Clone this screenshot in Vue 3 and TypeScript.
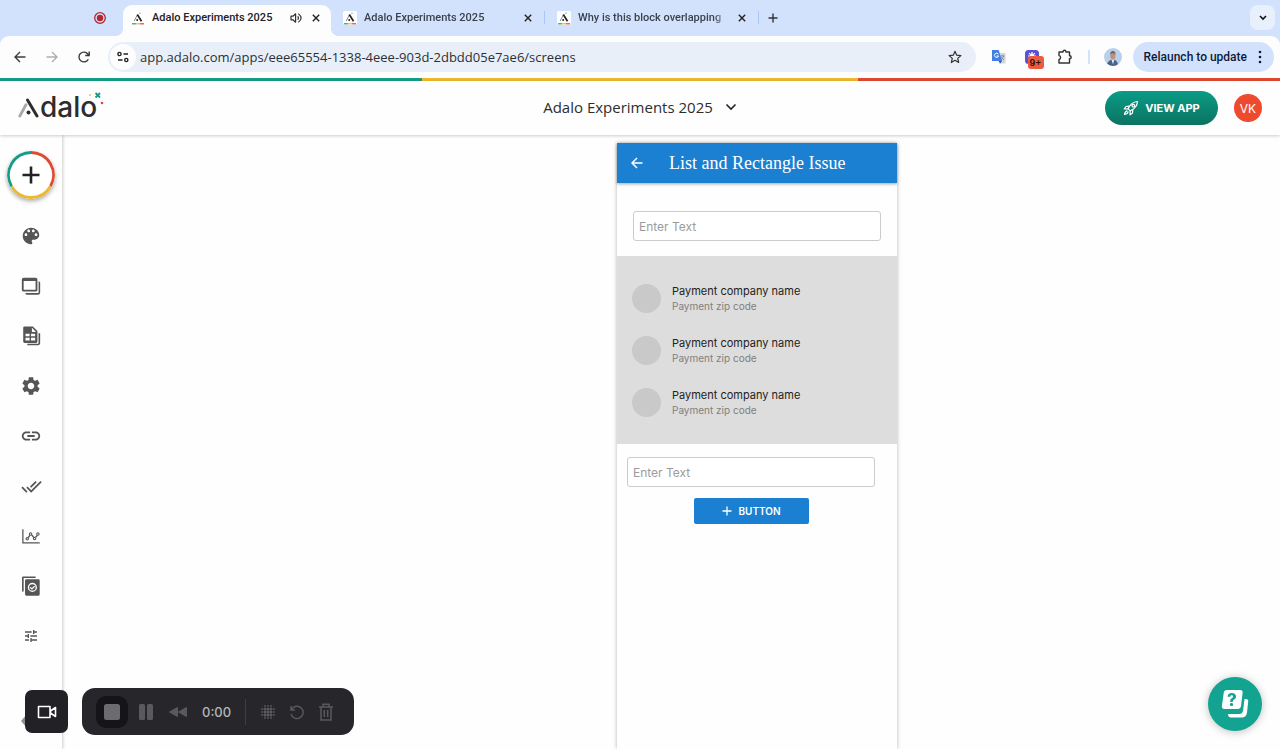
<script setup lang="ts">
import { ref } from 'vue'

interface Tab {
  id: number
  title: string
  active: boolean
  audible: boolean
}

interface NavItem {
  label: string
  path: string
  size: number
  evenOdd?: boolean
}

const tabs: Tab[] = [
  { id: 1, title: 'Adalo Experiments 2025', active: true, audible: true },
  { id: 2, title: 'Adalo Experiments 2025', active: false, audible: false },
  { id: 3, title: 'Why is this block overlapping', active: false, audible: false },
]

const url = ref('app.adalo.com/apps/eee65554-1338-4eee-903d-2dbdd05e7ae6/screens')

const navItems: NavItem[] = [
  {
    label: 'Branding',
    size: 22,
    path: 'M12 3c-4.97 0-9 4.03-9 9s4.03 9 9 9c.83 0 1.5-.67 1.5-1.5 0-.39-.15-.74-.39-1.01-.23-.26-.38-.61-.38-.99 0-.83.67-1.5 1.5-1.5H16c2.76 0 5-2.24 5-5 0-4.42-4.03-8-9-8zm-5.5 9c-.83 0-1.5-.67-1.5-1.5S5.67 9 6.5 9 8 9.67 8 10.5 7.33 12 6.5 12zm3-4C8.67 8 8 7.33 8 6.5S8.67 5 9.5 5s1.5.67 1.5 1.5S10.33 8 9.5 8zm5 0c-.83 0-1.5-.67-1.5-1.5S13.67 5 14.5 5s1.5.67 1.5 1.5S15.33 8 14.5 8zm3 4c-.83 0-1.5-.67-1.5-1.5S16.67 9 17.5 9s1.5.67 1.5 1.5-.67 1.5-1.5 1.5z',
  },
  {
    label: 'Screens',
    size: 22,
    evenOdd: true,
    path: 'M4 3h13a2 2 0 0 1 2 2v11a2 2 0 0 1-2 2H4a2 2 0 0 1-2-2V5a2 2 0 0 1 2-2zM4 6.500v9.500h13V6.500zM20.300 7H20.800a1.200 1.200 0 0 1 1.200 1.200V19a2.500 2.500 0 0 1-2.500 2.500H7.200A1.200 1.200 0 0 1 6 20.300V19.700h13.300a1 1 0 0 0 1-1z',
  },
  {
    label: 'Database',
    size: 22,
    evenOdd: true,
    path: 'M5 1.500h9l5 5V18a1.500 1.500 0 0 1-1.500 1.500H5A1.500 1.500 0 0 1 3.500 18V3A1.500 1.500 0 0 1 5 1.500zM13 3v4.500h4.500zM6 9.500v2.800h4.500V9.500zM12 9.500v2.800h4.500V9.500zM6 14v2.800h4.500V14zM12 14v2.800h4.500V14zM20.200 9H22v11a2 2 0 0 1-2 2H8v-1.500h11.200a1 1 0 0 0 1-1z',
  },
  {
    label: 'Settings',
    size: 22,
    path: 'M19.140 12.940c.04-.3.06-.61.06-.94 0-.32-.02-.64-.07-.94l2.030-1.580c.18-.14.23-.41.12-.61l-1.920-3.320c-.12-.22-.37-.29-.59-.22l-2.390.96c-.5-.38-1.030-.7-1.620-.94l-.36-2.540c-.04-.24-.24-.41-.48-.41h-3.840c-.24 0-.43.17-.47.41l-.36 2.540c-.59.24-1.130.57-1.620.94l-2.390-.96c-.22-.08-.47 0-.59.22L2.740 8.870c-.12.21-.08.47.12.61l2.030 1.580c-.05.3-.09.63-.09.94s.02.64.07.94l-2.030 1.580c-.18.14-.23.41-.12.61l1.920 3.320c.12.22.37.29.59.22l2.390-.96c.5.38 1.030.7 1.620.94l.36 2.540c.05.24.24.41.48.41h3.840c.24 0 .44-.17.47-.41l.36-2.540c.59-.24 1.130-.56 1.620-.94l2.390.96c.22.08.47 0 .59-.22l1.920-3.320c.12-.22.07-.47-.12-.61l-2.010-1.580zM12 15.600c-1.980 0-3.600-1.620-3.600-3.600s1.620-3.600 3.600-3.600 3.600 1.620 3.600 3.600-1.620 3.600-3.600 3.600z',
  },
  {
    label: 'Integrations',
    size: 22,
    path: 'M3.900 12c0-1.710 1.390-3.100 3.100-3.100h4V7H7c-2.760 0-5 2.240-5 5s2.240 5 5 5h4v-1.900H7c-1.710 0-3.100-1.390-3.100-3.100zM8 13h8v-2H8v2zm9-6h-4v1.900h4c1.710 0 3.100 1.390 3.100 3.100s-1.390 3.100-3.100 3.100h-4V17h4c2.760 0 5-2.240 5-5s-2.240-5-5-5z',
  },
  {
    label: 'Publish',
    size: 21,
    path: 'M18 7l-1.410-1.410-6.340 6.340 1.410 1.410L18 7zm4.240-1.410L11.660 16.170 7.480 12l-1.410 1.410L11.660 19l12-12-1.420-1.410zM.41 13.410L6 19l1.410-1.410L1.830 12 .41 13.410z',
  },
  {
    label: 'Analytics',
    size: 20,
    evenOdd: true,
    path: 'M1.500 4H3v15.600h19.500V21h-21zM7.500 13.300a2.100 2.100 0 1 1 0 4.200 2.100 2.100 0 0 1 0-4.200zm0 1.300a.8.8 0 1 0 0 1.600.8.8 0 0 0 0-1.600zM11.500 7.500a2.100 2.100 0 1 1 0 4.200 2.100 2.100 0 0 1 0-4.200zm0 1.300a.8.8 0 1 0 0 1.600.8.8 0 0 0 0-1.600zM16.300 13a2.100 2.100 0 1 1 0 4.200 2.100 2.100 0 0 1 0-4.200zm0 1.300a.8.8 0 1 0 0 1.600.8.8 0 0 0 0-1.600zM20.300 7.500a2.100 2.100 0 1 1 0 4.200 2.100 2.100 0 0 1 0-4.200zm0 1.300a.8.8 0 1 0 0 1.600.8.8 0 0 0 0-1.600zM9.800 11l1.500.7-1.700 2.300-1.500-.7zM12.400 11.300l1.500-.7 1.900 2.600-1.500.7zM18.700 11l1.500.7-2 2.300-1.500-.7z',
  },
  {
    label: 'App versions',
    size: 22,
    evenOdd: true,
    path: 'M3.500 1.500H17V3.200H4V18H2.200V2.800a1.300 1.300 0 0 1 1.300-1.300zM7 4.500h13A1.500 1.500 0 0 1 21.500 6v15a1.500 1.500 0 0 1-1.500 1.500H7A1.500 1.500 0 0 1 5.500 21V6A1.500 1.500 0 0 1 7 4.500zM13.500 8.500a5 5 0 1 0 0 10 5 5 0 0 0 0-10zm0 1.500a3.500 3.500 0 1 1 0 7 3.500 3.500 0 0 1 0-7zM11.500 13l1.500 1.300 2.500-2.500.9.900-3.400 3.400-2.400-2.200z',
  },
  {
    label: 'Preferences',
    size: 16,
    path: 'M3 17v2h6v-2H3zM3 5v2h10V5H3zm10 16v-2h8v-2h-8v-2h-2v6h2zM7 9v2H3v2h4v2h2V9H7zm14 4v-2H11v2h10zm-6-4h2V7h4V5h-4V3h-2v6z',
  },
]

const payments = [1, 2, 3].map((id) => ({
  id,
  name: 'Payment company name',
  zip: 'Payment zip code',
}))

// Halftone icon: a dense 3x3 core with smaller dots around it and no corners.
const halftone = [0, 1, 2, 3, 4].flatMap((row) =>
  [0, 1, 2, 3, 4].map((col) => ({
    x: 2 + col * 3,
    y: 2 + row * 3,
    inner: row > 0 && row < 4 && col > 0 && col < 4,
    corner: row % 4 === 0 && col % 4 === 0,
  })),
).filter((dot) => !dot.corner)

const firstText = ref('')
const secondText = ref('')
</script>

<template>
  <div class="window">
    <div class="tab-strip">
      <div class="recording">
        <svg width="14" height="14" viewBox="0 0 14 14" aria-hidden="true">
          <circle cx="7" cy="7" r="5.300" fill="none" stroke="#b3262e" stroke-width="1.300" />
          <circle cx="7" cy="7" r="3.200" fill="#b3262e" />
        </svg>
      </div>
      <div v-for="tab in tabs" :key="tab.id" class="tab" :class="{ active: tab.active }">
        <svg class="favicon" width="14" height="14" viewBox="0 0 14 14" aria-hidden="true">
          <rect width="14" height="14" rx="2" fill="#fff" />
          <path d="M3.200 10 6.300 4" stroke="#8b8b8b" stroke-width="1" fill="none" />
          <path d="M6.300 3.500 10.500 10.300" stroke="#222" stroke-width="1.700" fill="none" />
          <circle cx="6.200" cy="9" r="1" fill="#222" />
          <circle cx="9" cy="2.200" r=".6" fill="#1e9b87" />
          <path d="M1 12.800h4" stroke="#1e9b87" stroke-width="1.200" />
          <path d="M5 12.800h4" stroke="#ecb82f" stroke-width="1.200" />
          <path d="M9 12.800h4" stroke="#e0492f" stroke-width="1.200" />
        </svg>
        <span class="tab-title">{{ tab.title }}</span>
        <svg v-if="tab.audible" width="13" height="12" viewBox="0 0 13 12" fill="none" stroke="#333" stroke-width="1.200" aria-hidden="true">
          <path d="M1 4.200h2l2.600-2.400v8.400L3 7.800H1z" stroke-linejoin="round" />
          <path d="M7.800 4.200q1.300 1.800 0 3.600M8.300 1.600q5.600 4.400 0 8.800" />
        </svg>
        <button class="icon-button close" aria-label="Close tab">
          <svg width="10" height="10" viewBox="0 0 10 10" stroke="#222" stroke-width="1.400">
            <path d="m1.800 1.800 6.400 6.400m0-6.400-6.400 6.400" />
          </svg>
        </button>
      </div>
      <button class="icon-button new-tab" aria-label="New tab">
        <svg width="10" height="10" viewBox="0 0 10 10" stroke="#333" stroke-width="1.400">
          <path d="M5 .5v9M.5 5h9" />
        </svg>
      </button>
      <button class="icon-button tab-search" aria-label="Search tabs">
        <svg width="8" height="6" viewBox="0 0 8 6" fill="none" stroke="#111" stroke-width="1.600">
          <path d="m1 1 3 3 3-3" />
        </svg>
      </button>
    </div>

    <div class="toolbar">
      <div class="history">
        <button class="icon-button" aria-label="Back">
          <svg width="12" height="12" viewBox="0 0 12 12" fill="none" stroke="#3c3c3c" stroke-width="1.400">
            <path d="M11.500 6H1.200M6 1 1 6l5 5" />
          </svg>
        </button>
        <button class="icon-button" aria-label="Forward">
          <svg width="12" height="12" viewBox="0 0 12 12" fill="none" stroke="#adadad" stroke-width="1.400">
            <path d="M.5 6h10.300M6 1l5 5-5 5" />
          </svg>
        </button>
        <button class="icon-button" aria-label="Reload">
          <svg width="12" height="12" viewBox="0 0 12 12" fill="none" stroke="#3c3c3c" stroke-width="1.400">
            <path d="M10.300 8.200A4.900 4.900 0 1 1 9.800 3L11 4.300M11.200.5v4H7.200" />
          </svg>
        </button>
      </div>
      <div class="address">
        <button class="icon-button site-info" aria-label="Site information">
          <svg width="12" height="12" viewBox="0 0 12 12" fill="none" stroke="#222" stroke-width="1.400">
            <circle cx="2.500" cy="3" r="1.600" />
            <path d="M6.500 3H11M1 9h4.500" />
            <circle cx="9.300" cy="9" r="1.600" />
          </svg>
        </button>
        <input v-model="url" class="url" type="text" aria-label="Address" />
        <button class="icon-button" aria-label="Bookmark this tab">
          <svg width="14" height="14" viewBox="0 0 14 14" fill="none" stroke="#333" stroke-width="1.200" stroke-linejoin="round">
            <path d="m7 1.300 1.700 3.900 4.200.4-3.200 2.800 1 4.100L7 10.300l-3.700 2.200 1-4.100L1.100 5.600l4.200-.4z" />
          </svg>
        </button>
      </div>
      <div class="extensions">
        <button class="icon-button" aria-label="Translate">
          <svg width="16" height="16" viewBox="0 0 16 16">
            <path d="M6 4h8.500v10.500H9.500z" fill="#d3d5da" />
            <path d="M9.500 7h4M11.500 6v1M12.800 7q-.8 2.800-3 4M10 8q1 2 3 3" stroke="#73819b" fill="none" stroke-width=".8" />
            <path d="M1 1h6.700l3.300 11H1z" fill="#4480e4" />
            <path d="M7.700 12H11l-2 2.700z" fill="#2355b3" />
            <path d="M7.400 5.200A2.100 2.100 0 1 0 7.600 7H5.700" stroke="#fff" fill="none" stroke-width="1" />
          </svg>
        </button>
        <button class="icon-button badge-host" aria-label="Screen recorder, 9+ notifications">
          <svg width="16" height="16" viewBox="0 0 16 16">
            <rect x="1" y="1" width="14" height="14" rx="3.500" fill="#5b50d6" />
            <g stroke="#fff" stroke-width="1.200">
              <path d="M8 3v8M4 7h8M5.200 4.200l5.600 5.600M10.800 4.200 5.200 9.800" />
            </g>
            <circle cx="8" cy="7" r="1.800" fill="#fff" />
          </svg>
          <span class="badge">9+</span>
        </button>
        <button class="icon-button" aria-label="Extensions">
          <svg width="16" height="16" viewBox="0 0 16 16" fill="none" stroke="#333" stroke-width="1.400" stroke-linejoin="round">
            <path d="M2 3h4q0-1.700 1.500-1.700T9 3h3.500v3.800q1.700 0 1.700 1.500t-1.700 1.500V14H2v-3.600q1.600-.2 1.600-1.900T2 6.600z" />
          </svg>
        </button>
        <span class="divider"></span>
        <button class="icon-button" aria-label="Profile">
          <svg width="18" height="18" viewBox="0 0 18 18">
            <defs><clipPath id="avatar"><circle cx="9" cy="9" r="9" /></clipPath></defs>
            <g clip-path="url(#avatar)">
              <rect width="18" height="18" fill="#b9d0ea" />
              <path d="M3 18q0-6 6-6.500 5 .5 5 6.500z" fill="#4a6287" />
              <path d="m7.500 11.500 1.500 5 1.300-5z" fill="#e8edf4" />
              <ellipse cx="8.800" cy="7.500" rx="2.600" ry="3.900" fill="#bd917f" />
              <path d="M6.200 6.500q0-3.500 2.700-3.500t2.600 3.500Q9 4 6.200 6.500z" fill="#6f6762" />
            </g>
          </svg>
        </button>
      </div>
      <button class="relaunch">
        Relaunch to update
        <svg width="4" height="14" viewBox="0 0 4 14" fill="#0b1b3d" aria-hidden="true">
          <circle cx="2" cy="2" r="1.300" /><circle cx="2" cy="7" r="1.300" /><circle cx="2" cy="12" r="1.300" />
        </svg>
      </button>
    </div>

    <div class="brand-stripe"></div>

    <header class="app-header">
      <a class="logo" href="#" aria-label="Adalo">
        <svg width="22" height="24" viewBox="0 0 22 24" fill="none" stroke-linecap="round" aria-hidden="true">
          <path d="M1.800 21 8 9.800" stroke="#a9a9a9" stroke-width="2.800" />
          <path d="M9.500 5 19 21" stroke="#2d2d2d" stroke-width="3" />
          <circle cx="10.500" cy="17.500" r="2" fill="#2d2d2d" />
        </svg>
        <span>dalo</span>
        <svg class="sparks" width="18" height="14" viewBox="0 0 18 14" aria-hidden="true">
          <circle cx="3" cy="4" r="1" fill="#efc04a" />
          <path d="m8.500 2 4.500 4.500m0-4.500L8.500 6.500" stroke="#159c86" stroke-width="1.800" />
          <circle cx="15" cy="12" r="1.300" fill="#e3492f" />
        </svg>
      </a>
      <button class="app-name">
        Adalo Experiments 2025
        <svg width="12" height="8" viewBox="0 0 12 8" fill="none" stroke="#222" stroke-width="1.600" aria-hidden="true">
          <path d="m1.500 1.500 4.500 4.500 4.500-4.500" />
        </svg>
      </button>
      <div class="account">
        <button class="view-app">
          <svg width="16" height="16" viewBox="0 0 16 16" fill="none" stroke="#fff" stroke-width="1.200" stroke-linejoin="round" aria-hidden="true">
            <path d="M5.200 8.800Q8 2 14.500 1.500 14 8 7.200 10.800z" />
            <circle cx="10.300" cy="5.700" r="1.300" />
            <path d="M6.200 6.200 3 6.500 1.200 9l4 -.2M9.800 9.800 9.500 13 7 14.800l.2-4" />
            <path d="M4.500 10.800Q2 11 1.500 14.500 5 14 5.200 11.500" />
          </svg>
          VIEW APP
        </button>
        <button class="user">VK</button>
      </div>
    </header>

    <div class="workspace">
      <nav class="sidebar" aria-label="Editor">
        <button class="add" aria-label="Add">
          <svg width="48" height="48" viewBox="0 0 48 48" fill="none">
            <circle cx="24" cy="24" r="23" fill="#fff" />
            <path d="M24 1.500A22.500 22.500 0 0 1 43.500 35.200" stroke="#e0492f" stroke-width="2.800" />
            <path d="M43.500 35.200A22.500 22.500 0 0 1 4.500 35.200" stroke="#ecb82f" stroke-width="2.800" />
            <path d="M4.500 35.200A22.500 22.500 0 0 1 24 1.500" stroke="#159c86" stroke-width="2.800" />
            <path d="M24 15.500v17M15.500 24h17" stroke="#222" stroke-width="2.600" />
          </svg>
        </button>
        <button v-for="item in navItems" :key="item.label" class="nav-item" :aria-label="item.label">
          <svg :width="item.size" :height="item.size" viewBox="0 0 24 24" fill="#555">
            <path :d="item.path" :fill-rule="item.evenOdd ? 'evenodd' : 'nonzero'" />
          </svg>
        </button>
        <button class="nav-item collapse" aria-label="Collapse">
          <svg width="22" height="22" viewBox="0 0 22 22" fill="#8f8f8f"><path d="M1 8 7 1v14z" /></svg>
        </button>
      </nav>

      <main class="canvas">
        <section class="phone" aria-label="Screen preview">
          <div class="phone-bar">
            <button class="icon-button" aria-label="Go back">
              <svg width="12" height="12" viewBox="0 0 12 12" fill="none" stroke="#fff" stroke-width="1.500">
                <path d="M11.500 6H1.200M6 1 1 6l5 5" />
              </svg>
            </button>
            <h1>List and Rectangle Issue</h1>
          </div>
          <input v-model="firstText" class="field first" type="text" placeholder="Enter Text" aria-label="First text" />
          <ul class="payments">
            <li v-for="payment in payments" :key="payment.id">
              <span class="dot"></span>
              <div>
                <p class="name">{{ payment.name }}</p>
                <p class="zip">{{ payment.zip }}</p>
              </div>
            </li>
          </ul>
          <input v-model="secondText" class="field second" type="text" placeholder="Enter Text" aria-label="Second text" />
          <button class="action">
            <svg width="10" height="10" viewBox="0 0 10 10" stroke="#fff" stroke-width="1.300" aria-hidden="true">
              <path d="M5 .5v9M.5 5h9" />
            </svg>
            BUTTON
          </button>
        </section>
      </main>
    </div>

    <div class="recorder">
      <button class="camera" aria-label="Camera">
        <svg width="20" height="14" viewBox="0 0 20 14" fill="none" stroke="#fff" stroke-width="1.600" stroke-linejoin="round">
          <path d="M1.500 1.500h11.500v11H1.500zM13.500 6l5-3.500v9l-5-3.500z" />
        </svg>
      </button>
      <div class="controls">
        <button class="stop" aria-label="Stop">
          <svg width="16" height="16" viewBox="0 0 16 16"><rect width="16" height="16" rx="2.500" fill="#6c6c70" /></svg>
        </button>
        <button class="icon-button" aria-label="Pause">
          <svg width="16" height="16" viewBox="0 0 16 16" fill="#59595e">
            <rect x="1" width="6" height="16" rx="1.500" /><rect x="9" width="6" height="16" rx="1.500" />
          </svg>
        </button>
        <button class="icon-button" aria-label="Rewind">
          <svg width="20" height="12" viewBox="0 0 20 12" fill="#59595e" stroke="#59595e" stroke-linejoin="round">
            <path d="M9.500 1.500v9L1.500 6zM18.500 1.500v9l-8-4.500z" />
          </svg>
        </button>
        <span class="time">0:00</span>
        <span class="rule"></span>
        <div class="tools">
          <button class="icon-button" aria-label="Effects">
            <svg width="16" height="16" viewBox="0 0 16 16" fill="#59595e">
              <circle v-for="(dot, i) in halftone" :key="i" :cx="dot.x" :cy="dot.y" :r="dot.inner ? 1.500 : 0.900" />
            </svg>
          </button>
          <button class="icon-button" aria-label="Restart">
            <svg width="16" height="16" viewBox="0 0 16 16" fill="none" stroke="#59595e" stroke-width="1.400">
              <path d="M2 2v4h4M2.500 5.500A6.200 6.200 0 1 1 2 10" />
            </svg>
          </button>
          <button class="icon-button" aria-label="Delete">
            <svg width="16" height="18" viewBox="0 0 16 18" fill="none" stroke="#59595e" stroke-width="1.500">
              <path d="M1 4h14M5 4V1.300h6V4M3 4v13h10V4M6.300 7v7M9.700 7v7" />
            </svg>
          </button>
        </div>
      </div>
    </div>

    <button class="help" aria-label="Help">
      <svg width="28" height="30" viewBox="0 0 28 30">
        <path d="M23.500 10H25q2.500 0 2.200 2.500L26 23.500q-.6 5-5.500 5H10q-2.800 0-3-3.500h11q3.500 0 4.100-3.500z" fill="#fff" />
        <path d="M6 1h13q3 0 2.600 3L20 17q-.4 3-3.400 3H3.500q-3 0-2.600-3L2.700 4Q3 1 6 1z" fill="#fff" />
        <text x="11" y="17" text-anchor="middle">?</text>
      </svg>
    </button>
  </div>
</template>

<style>
body {
  margin: 0;
  background: #fefefe;
}
</style>

<style scoped>
* {
  box-sizing: border-box;
}

.window {
  display: flex;
  flex-direction: column;
  min-height: 100vh;
  background: #d3e2fc;
  color: #222;
  font-family: Inter, 'Liberation Sans', sans-serif;
}

button {
  padding: 0;
  border: 0;
  background: none;
  color: inherit;
  font: inherit;
  cursor: pointer;
}

svg {
  display: block;
  flex: none;
}

.icon-button {
  display: grid;
  place-items: center;
  flex: none;
}

.tab-strip {
  display: flex;
  align-items: flex-end;
  height: 36px;
}

.recording {
  display: flex;
  align-items: center;
  width: 123px;
  height: 36px;
  padding-left: 93px;
}

.tab {
  position: relative;
  display: flex;
  align-items: center;
  gap: 7px;
  width: 214px;
  height: 31px;
  padding: 0 11px 5px 12px;
  font-family: Roboto, 'Liberation Sans', sans-serif;
  font-size: 11px;
  font-weight: 500;
  line-height: 16px;
  color: #3b414d;
}

.tab.active {
  width: 208px;
  padding-left: 8px;
  padding-right: 9px;
  border-radius: 9px 9px 0 0;
  background: #fdfdfe;
  color: #222;
}

.tab.active::before,
.tab.active::after {
  content: '';
  position: absolute;
  bottom: 0;
  width: 8px;
  height: 8px;
}

.tab.active::before {
  right: 100%;
  background: radial-gradient(circle at 0 0, transparent 8px, #fdfdfe 8px);
}

.tab.active::after {
  left: 100%;
  background: radial-gradient(circle at 100% 0, transparent 8px, #fdfdfe 8px);
}

.tab:not(.active) {
  background: linear-gradient(#a9c7f7, #a9c7f7) 100% 6px / 1px 13px no-repeat;
}

.tab-title {
  flex: 1;
  white-space: nowrap;
}

.tab:not(.active) .tab-title {
  mask-image: linear-gradient(to right, #000 90%, transparent);
}

.close {
  width: 12px;
  height: 16px;
}

.new-tab {
  width: 28px;
  height: 31px;
  padding-bottom: 5px;
}

.tab-search {
  align-self: flex-start;
  width: 25px;
  height: 25px;
  margin: 5px 5px 0 auto;
  border-radius: 8px;
  background: #e9f0fd;
}

.toolbar {
  display: flex;
  align-items: center;
  height: 42px;
  padding: 0 6px 1px 14px;
  border-radius: 9px 9px 0 0;
  background: #fdfdfe;
}

.history {
  display: flex;
  gap: 20px;
  margin-right: 18px;
}

.address {
  display: flex;
  flex: 1;
  align-items: center;
  height: 30px;
  padding: 0 14px 0 2px;
  border-radius: 15px;
  background: #e9eff8;
}

.site-info {
  width: 26px;
  height: 26px;
  border-radius: 50%;
  background: #fdfdfe;
}

.url {
  flex: 1;
  min-width: 0;
  padding: 0 4px;
  border: 0;
  background: none;
  color: #2c3038;
  font: 13px/18px 'Open Sans', 'Liberation Sans', sans-serif;
  outline: none;
}

.extensions {
  display: flex;
  align-items: center;
  gap: 17px;
  margin: 0 11px 0 15px;
}

.extensions .divider {
  width: 2px;
  height: 14px;
  margin: 0 -3px 0 -2px;
  background: #d3e2fc;
}

.badge-host {
  position: relative;
}

.badge {
  position: absolute;
  left: 4px;
  top: 7px;
  width: 16px;
  height: 13px;
  border-radius: 3px;
  background: #ee5a3d;
  color: #28100b;
  font-size: 9px;
  font-weight: 600;
  line-height: 13px;
  text-align: center;
}

.relaunch {
  display: flex;
  align-items: center;
  gap: 11px;
  height: 30px;
  padding: 0 12px 0 11px;
  border-radius: 15px;
  background: #d3e2fc;
  color: #0b1b3d;
  font-family: Roboto, 'Liberation Sans', sans-serif;
  font-size: 12px;
  font-weight: 500;
  white-space: nowrap;
}

.brand-stripe {
  height: 3px;
  background: linear-gradient(to right, #159c86 33%, #ecb82f 33% 67%, #e0492f 67%);
}

.app-header {
  position: relative;
  z-index: 1;
  display: grid;
  grid-template-columns: 1fr auto 1fr;
  align-items: center;
  height: 54px;
  padding: 0 18px;
  background: #fefefe;
  box-shadow: 0 1px 3px rgba(0, 0, 0, 0.2);
}

.logo {
  display: flex;
  align-items: center;
  justify-self: start;
  margin-bottom: 3px;
  color: #2d2d2d;
  font: 500 28px/32px Inter, 'Liberation Sans', sans-serif;
  text-decoration: none;
}

.logo .sparks {
  align-self: flex-start;
  margin-left: -10px;
}

.app-name {
  display: flex;
  align-items: center;
  gap: 12px;
  margin-bottom: 3px;
  color: #2d2d2d;
  font: 15px/20px 'Open Sans', 'Liberation Sans', sans-serif;
}

.account {
  display: flex;
  align-items: center;
  justify-self: end;
  gap: 16px;
}

.view-app {
  display: flex;
  align-items: center;
  justify-content: center;
  gap: 6px;
  width: 113px;
  height: 34px;
  border-radius: 17px;
  background: linear-gradient(#0a9c86, #0b7362);
  color: #fff;
  font-size: 11px;
  font-weight: 700;
}

.user {
  width: 28px;
  height: 28px;
  border-radius: 50%;
  background: #ee4a2e;
  color: #fff;
  font-size: 12px;
}

.workspace {
  display: flex;
  flex: 1;
  background: #fefefe;
}

.sidebar {
  display: flex;
  flex-direction: column;
  align-items: center;
  width: 62px;
  box-shadow: 1px 0 3px rgba(0, 0, 0, 0.2);
}

.add {
  margin: 16px 0 12px;
  border-radius: 50%;
  box-shadow: 0 2px 4px rgba(0, 0, 0, 0.35);
}

.nav-item {
  display: grid;
  place-items: center;
  width: 62px;
  height: 50px;
}

.collapse {
  margin-top: auto;
}

.canvas {
  display: flex;
  flex: 1;
  justify-content: center;
  padding: 8px 0 0 172px;
}

.phone {
  display: flex;
  flex-direction: column;
  width: 280px;
  background: #fefefe;
  box-shadow: 0 0 4px rgba(0, 0, 0, 0.3);
}

.phone-bar {
  display: flex;
  align-items: center;
  gap: 26px;
  height: 40px;
  padding: 0 14px;
  background: #1b80d2;
  color: #fff;
  box-shadow: 0 1px 3px rgba(0, 0, 0, 0.35);
}

h1 {
  margin: 0;
  font: 400 18px/24px 'Liberation Serif', serif;
  white-space: nowrap;
}

.field {
  width: 248px;
  height: 30px;
  padding: 0 5px;
  border: 1px solid #ccc;
  border-radius: 3px;
  background: #fff;
  color: #333;
  font: 12px/18px Inter, 'Liberation Sans', sans-serif;
}

.field::placeholder {
  color: #9b9b9b;
  opacity: 1;
}

.first {
  margin: 28px 16px 15px;
}

.second {
  margin: 13px 10px 11px;
}

.payments {
  display: flex;
  flex-direction: column;
  gap: 16px;
  margin: 0;
  padding: 24px 15px;
  background: #ddd;
  list-style: none;
}

.payments li {
  display: flex;
  align-items: center;
  gap: 11px;
  height: 36px;
}

.dot {
  width: 29px;
  height: 29px;
  border-radius: 50%;
  background: #c9c9c9;
}

p {
  margin: 0;
}

.name {
  color: #222;
  font-size: 11px;
  line-height: 16px;
}

.zip {
  color: #7f7f7f;
  font-size: 10px;
  line-height: 15px;
}

.action {
  display: flex;
  align-items: center;
  justify-content: center;
  gap: 6px;
  width: 115px;
  height: 26px;
  margin-left: 77px;
  border-radius: 2px;
  background: #1b80d2;
  color: #fff;
  font-size: 10px;
  font-weight: 600;
}

.recorder {
  position: fixed;
  left: 25px;
  bottom: 14px;
  z-index: 2;
  display: flex;
  align-items: center;
  gap: 14px;
}

.camera {
  display: grid;
  place-items: center;
  width: 43px;
  height: 43px;
  border-radius: 7px;
  background: #222226;
}

.controls {
  display: flex;
  align-items: center;
  gap: 14px;
  height: 47px;
  padding: 0 20px 0 14px;
  border-radius: 13px;
  background: #27272b;
}

.tools {
  display: flex;
  align-items: center;
  gap: 13px;
}

.stop {
  display: grid;
  place-items: center;
  width: 32px;
  height: 32px;
  margin-right: -4px;
  border-radius: 10px;
  background: #151517;
}

.time {
  color: #b5b5b8;
  font-size: 13px;
  font-weight: 500;
}

.rule {
  width: 1px;
  height: 26px;
  background: #3d3d42;
}

.help {
  position: fixed;
  right: 18px;
  bottom: 18px;
  z-index: 2;
  display: grid;
  place-items: center;
  width: 54px;
  height: 54px;
  border-radius: 50%;
  background: #12a391;
  box-shadow: 0 1px 8px rgba(0, 0, 0, 0.25);
}

.help text {
  fill: #12a391;
  font: 800 17px Inter, sans-serif;
}
</style>
